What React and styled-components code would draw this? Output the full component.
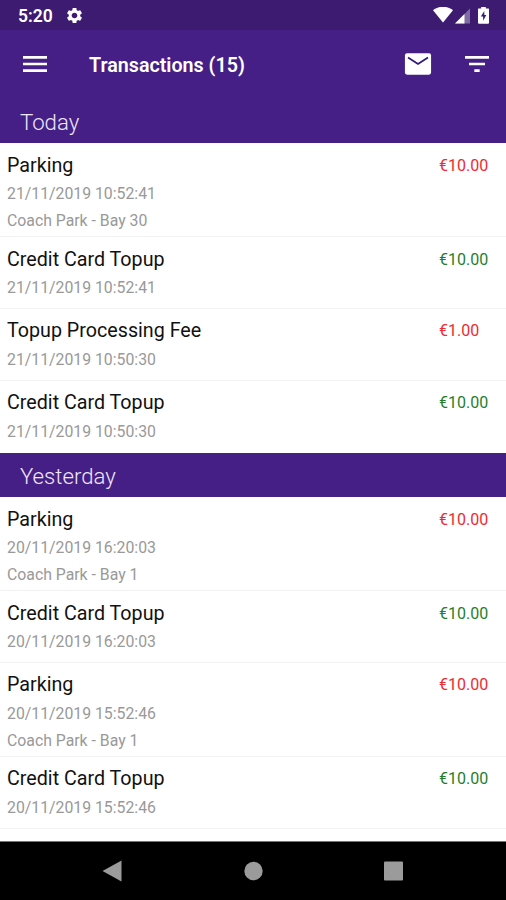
import React from 'react';
import styled, { createGlobalStyle } from 'styled-components';

const GlobalStyle = createGlobalStyle`
  body {
    margin: 0;
    background: #fff;
    font-family: Roboto, 'Liberation Sans', sans-serif;
  }
`

const Screen = styled.div`
  display: flex;
  flex-direction: column;
  width: 506px;
  height: 900px;
  overflow: hidden;
  background: #fff;
`

const StatusBar = styled.div`
  display: flex;
  flex: none;
  align-items: center;
  height: 30px;
  padding: 1px 15px 0 18px;
  box-sizing: border-box;
  background: #3c1b70;
  color: #fff;
`

const Clock = styled.span`
  width: 47px;
  font-size: 17.5px;
  font-weight: 600;
  line-height: 20px;
`

const StatusIcons = styled.div`
  display: flex;
  align-items: center;
  margin-left: auto;
`

const Toolbar = styled.header`
  display: flex;
  flex: none;
  align-items: center;
  height: 68.8px;
  padding: 0 13px 0.8px 19px;
  box-sizing: border-box;
  background: #451f85;
`

const Title = styled.h1`
  flex: 1;
  margin: 3px 0 0 38px;
  color: #fff;
  font-size: 19.7px;
  font-weight: 600;
  line-height: 24px;
`

const Actions = styled.div`
  display: flex;
  gap: 27px;
`

const Icon = styled.svg`
  display: block;
  flex: none;
  fill: #fff;
`

const List = styled.main`
  flex: 1;
  min-height: 0;
  overflow: hidden;
`

const SectionTitle = styled.h2`
  height: 44.6px;
  margin: 0;
  padding: 1px 20px 0;
  box-sizing: border-box;
  background: #451f85;
  color: #eee6fa;
  font-size: 22.2px;
  font-weight: 300;
  line-height: 44px;
`

const Row = styled.div`
  display: flex;
  justify-content: space-between;
  height: ${props => props.$tall ? '94px' : '71.8px'};
  padding: 9.2px 0 0 7px;
  box-sizing: border-box;
  border-bottom: 1px solid ${props => props.$last ? 'transparent' : '#f2f2f2'};
`

const Name = styled.div`
  color: #111;
  font-size: 19.7px;
  line-height: 26px;
`

const Detail = styled.div`
  margin-top: ${props => props.$first ? '1.5px' : '0'};
  color: #999;
  font-size: 15.8px;
  line-height: 27px;
`

const Amount = styled.div`
  width: 67px;
  color: ${props => props.$credit ? '#1f7f2a' : '#f02a30'};
  font-size: 16px;
  line-height: 26px;
`

const NavBar = styled.nav`
  display: flex;
  flex: none;
  align-items: center;
  justify-content: space-between;
  height: 59px;
  padding: 0 102px;
  box-sizing: border-box;
  border-top: 1px solid #777;
  background: #000;
`

const sections = [
  {
    title: 'Today',
    items: [
      { name: 'Parking', date: '21/11/2019 10:52:41', place: 'Coach Park - Bay 30', amount: '€10.00' },
      { name: 'Credit Card Topup', date: '21/11/2019 10:52:41', amount: '€10.00', credit: true },
      { name: 'Topup Processing Fee', date: '21/11/2019 10:50:30', amount: '€1.00' },
      { name: 'Credit Card Topup', date: '21/11/2019 10:50:30', amount: '€10.00', credit: true }
    ]
  },
  {
    title: 'Yesterday',
    items: [
      { name: 'Parking', date: '20/11/2019 16:20:03', place: 'Coach Park - Bay 1', amount: '€10.00' },
      { name: 'Credit Card Topup', date: '20/11/2019 16:20:03', amount: '€10.00', credit: true },
      { name: 'Parking', date: '20/11/2019 15:52:46', place: 'Coach Park - Bay 1', amount: '€10.00' },
      { name: 'Credit Card Topup', date: '20/11/2019 15:52:46', amount: '€10.00', credit: true },
    ]
  }
];

function Status() {
  return (
    <StatusBar>
      <Clock>5:20</Clock>
      <Icon width="19" height="19" viewBox="0 0 24 24">
        <path d="M19.14 12.94c.04-.3.06-.61.06-.94 0-.32-.02-.64-.07-.94l2.03-1.58c.18-.14.23-.41.12-.61l-1.92-3.32c-.12-.22-.37-.29-.59-.22l-2.39.96c-.5-.38-1.03-.7-1.62-.94l-.36-2.54c-.04-.24-.24-.41-.48-.41h-3.84c-.24 0-.43.17-.47.41l-.36 2.54c-.59.24-1.13.57-1.62.94l-2.39-.96c-.22-.08-.47 0-.59.22L2.74 8.87c-.12.21-.08.47.12.61l2.03 1.58c-.05.3-.09.63-.09.94s.02.64.07.94l-2.03 1.58c-.18.14-.23.41-.12.61l1.92 3.32c.12.22.37.29.59.22l2.39-.96c.5.38 1.03.7 1.62.94l.36 2.54c.05.24.24.41.48.41h3.84c.24 0 .44-.17.47-.41l.36-2.54c.59-.24 1.13-.56 1.62-.94l2.39.96c.22.08.47 0 .59-.22l1.92-3.32c.12-.22.07-.47-.12-.61l-2.01-1.58zM12 15.6c-1.98 0-3.6-1.62-3.6-3.6s1.62-3.6 3.6-3.6 3.6 1.62 3.6 3.6-1.62 3.6-3.6 3.6z" />
      </Icon>
      <StatusIcons>
        {/* wifi, signal, battery */}
        <Icon width="58" height="18" viewBox="0 0 58 18">
          <path d="M0 3.2C5.5-1.4 14.5-1.4 20 3.2L10 15.5z" />
          <path d="M22 16.5L37 1.5v15z" opacity=".35" />
          <path d="M22 16.5L31.5 7v9.5z" />
          <path d="M45.5 1.5h2.7V0h4.6v1.5h2.7q.5 0 .5.8v13.5q0 1-1 1h-9q-1 0-1-1v-13.5q0-.8.5-.8z" />
          <path d="M51.3 4l-3.5 5.5h2.3v4.2l3.2-5.7h-2z" fill="#3c1b70" />
        </Icon>
      </StatusIcons>
    </StatusBar>
  );
}

function Header({ title }) {
  return (
    <Toolbar>
      <Icon width="32" height="32" viewBox="0 0 24 24">
        <path d="M3 18h18v-2H3v2zm0-5h18v-2H3v2zm0-7v2h18V6H3z" />
      </Icon>
      <Title>{title}</Title>
      <Actions>
        <Icon width="32" height="32" viewBox="0 0 24 24">
          <rect x="2.2" y="4" width="19.6" height="16" rx="1.6" />
          <path d="M4.5 7.1L12 12l7.5-4.9" fill="none" stroke="#30177a" strokeWidth="1.3" />
        </Icon>
        <Icon width="32" height="32" viewBox="0 0 24 24">
          <path d="M10 18h4v-2h-4v2zM3 6v2h18V6H3zm3 7h12v-2H6v2z" />
        </Icon>
      </Actions>
    </Toolbar>
  );
}

function Transaction({ item, last }) {
  return (
    <Row $tall={!!item.place} $last={last}>
      <div>
        <Name>{item.name}</Name>
        <Detail $first>{item.date}</Detail>
        {item.place && <Detail>{item.place}</Detail>}
      </div>
      <Amount $credit={item.credit}>{item.amount}</Amount>
    </Row>
  );
}

function App() {
  return (
    <Screen>
      <GlobalStyle />
      <Status />
      <Header title="Transactions (15)" />
      <List>
        {sections.map((section, s) => (
          <section key={section.title}>
            <SectionTitle>{section.title}</SectionTitle>
            {section.items.map((item, i) => (
              <Transaction
                key={i}
                item={item}
                last={s === 0 && i === section.items.length - 1}
              />
            ))}
          </section>
        ))}
      </List>
      <NavBar>
        <Icon width="20" height="22" viewBox="0 0 20 22">
          <path d="M.5 11L19.5 .5v21z" fill="#9b9b9b" />
        </Icon>
        <Icon width="20" height="20" viewBox="0 0 20 20">
          <circle cx="10.5" cy="10" r="9.2" fill="#9b9b9b" />
        </Icon>
        <Icon width="20" height="20" viewBox="0 0 20 20">
          <rect x="0" y=".5" width="19" height="19" rx="1" fill="#9b9b9b" />
        </Icon>
      </NavBar>
    </Screen>
  );
}

export default App;
